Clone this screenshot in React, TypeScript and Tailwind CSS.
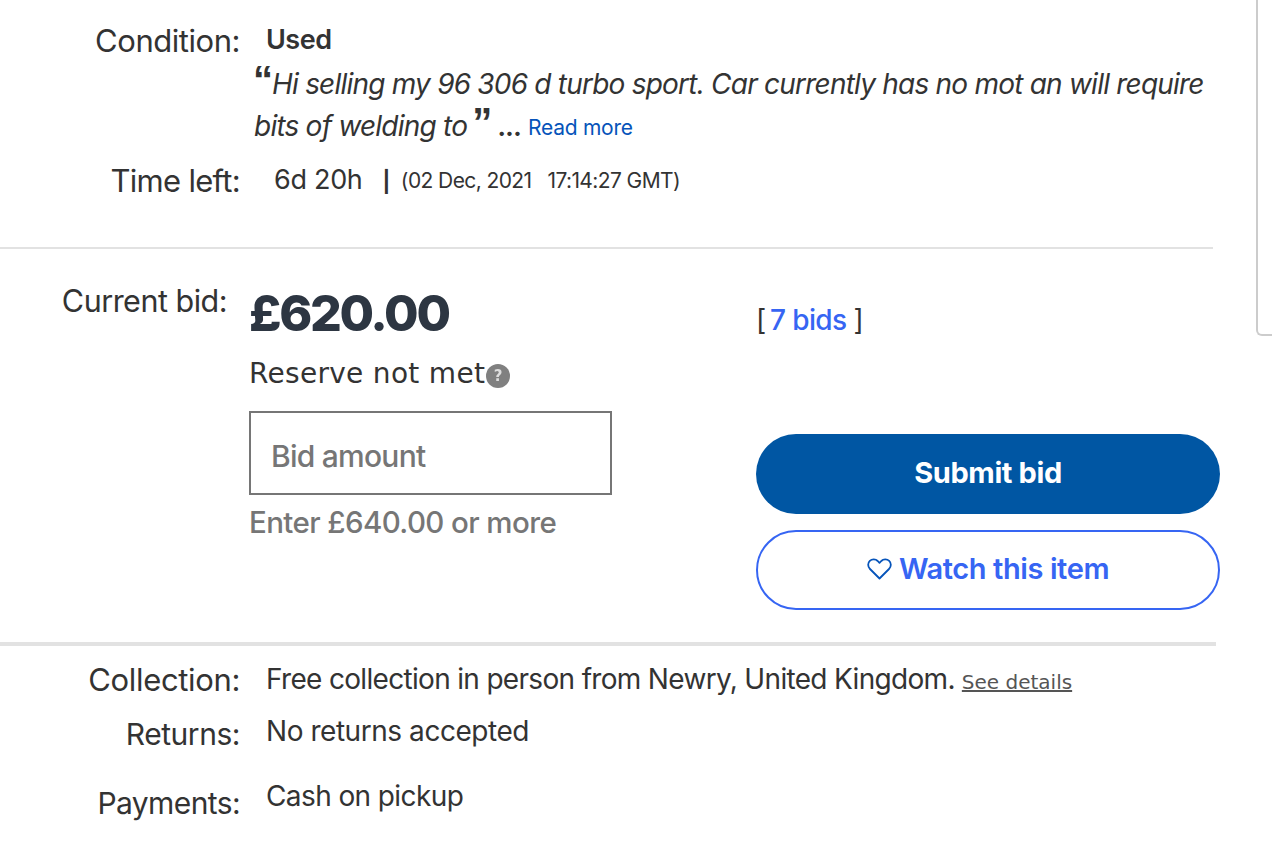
import React from "react";

const inter = "font-['Inter',sans-serif]";

function Label({ children, className = "" }: { children: React.ReactNode; className?: string }) {
  return <div className={`w-[240px] shrink-0 text-right leading-[36px] text-[#333] ${className}`}>{children}</div>;
}

export default function App() {
  return (
    <div className={`relative h-[848px] w-[1272px] overflow-hidden bg-white text-[#333] ${inter}`}>
      <div className="absolute left-[1256px] top-[-10px] h-[346px] w-[30px] rounded-bl-[6px] border-b-2 border-l-2 border-[#ccc]" />

      <section className="h-[247px] pt-[23px]">
        <div className="flex">
          <Label className="text-[31px] tracking-[-0.46px]">Condition:</Label>
          <div className="ml-[26px] mt-[-1px] text-[27px] font-semibold leading-[36px] tracking-[-0.5px]">Used</div>
        </div>
        <div className="ml-[253px] mt-[4px] w-[970px] text-[28px] italic leading-[42px] tracking-[-0.78px]">
          <span className="inline-block w-[19px] font-['Liberation_Sans',sans-serif] text-[40px] font-bold not-italic leading-[0] tracking-normal">“</span>Hi selling my 96 306 d turbo sport. Car currently has no mot an will require
          <br />
          <span className="ml-[1px]">bits of welding to</span><span className="ml-[5px] inline-block w-[18px] font-['Liberation_Sans',sans-serif] text-[40px] font-bold not-italic leading-[0] tracking-normal">”</span>
          <span className="ml-[7px] font-semibold not-italic tracking-[-1px]">...</span>
          <a className="ml-[7px] align-[1px] text-[21px] not-italic tracking-[-0.25px] text-[#0654ba]">Read more</a>
        </div>
        <div className="mt-[13px] flex items-center">
          <Label className="text-[31px] tracking-[-0.7px]">Time left:</Label>
          <div className="ml-[34px] mt-[-2px] text-[27px] tracking-[-0.3px]">6d 20h</div>
          <div className="ml-[20px] mt-[1px] text-[21px] font-bold tracking-[-0.5px]">|</div>
          <div className="ml-[11px] mt-[-2px] text-[21px] tracking-[-0.6px]">(02 Dec, 2021</div>
          <div className="ml-[16px] mt-[-2px] text-[21px] tracking-[-0.6px]">17:14:27 GMT)</div>
        </div>
      </section>

      <hr className="h-[2px] w-[1213px] border-0 bg-[#e2e2e2]" />

      <section className="flex h-[393px]">
        <div className="w-[227px] shrink-0 pt-[34px] text-right text-[30.5px] leading-[36px] tracking-[-0.5px]">Current bid:</div>
        <div className="ml-[22px] w-[363px] shrink-0">
          <div className="pt-[34px] text-[50px] font-extrabold leading-[60px] tracking-[-2.3px] text-[#2d3642]">£620.00</div>
          <div className="mt-[11px] flex items-center font-['DejaVu_Sans',sans-serif] text-[28px] leading-[40px] tracking-[0.3px]">
            Reserve not met
            <span className="ml-[1px] mt-[3px] flex h-[24px] w-[24px] items-center justify-center rounded-full bg-[#808080] text-[15px] font-bold tracking-normal text-[#ddd] blur-[0.4px]">?</span>
          </div>
          <div className="mt-[17px] flex h-[84px] w-[363px] items-center border-2 border-[#767676] pl-[20px] pt-[7px] font-medium text-[30px] tracking-[-0.75px] text-[#767676]">Bid amount</div>
          <div className="mt-[7px] text-[29.5px] font-medium leading-[40px] tracking-[-0.6px] text-[#767676]">Enter £640.00 or more</div>
        </div>
        <div className="ml-[144px] w-[464px] shrink-0">
          <div className="flex pt-[51px] text-[28px] leading-[40px] tracking-[-0.3px]">
            <span>[</span>
            <a className="ml-[4px] font-medium tracking-[-0.6px] text-[#3665f3]">7 bids</a>
            <span className="ml-[7px]">]</span>
          </div>
          <button className="mt-[94px] flex h-[80px] w-[464px] items-center justify-center rounded-full bg-[#0056a3] pb-[2px] text-[29px] font-bold tracking-[-0.4px] text-white">Submit bid</button>
          <button className="mt-[16px] flex h-[80px] w-[464px] items-center justify-center gap-[7px] rounded-full border-2 border-[#3665f3] pb-[2px] text-[29px] font-semibold tracking-[-0.4px] text-[#3665f3]">
            <svg width="25" height="22" viewBox="0 0 25 22" fill="none" stroke="#0654ba" strokeWidth="1.8" strokeLinejoin="round">
              <path d="M12.5 20.5 3 11C.6 8.6.6 5 2.8 2.9 5 .8 8.6.9 10.7 3l1.8 1.9L14.3 3c2.1-2.1 5.7-2.2 7.9-.1 2.2 2.1 2.2 5.7-.2 8.1z" />
            </svg>
            Watch this item
          </button>
        </div>
      </section>

      <hr className="h-[4px] w-[1216px] border-0 bg-[#e2e2e2]" />

      <section className="pt-[16px]">
        <div className="flex">
          <Label className="text-[31px] tracking-[-0.35px]">Collection:</Label>
          <div className="ml-[26px] mt-[-1px] text-[28px] leading-[36px] tracking-[-0.68px]">
            Free collection in person from Newry, United Kingdom.
            <a className="ml-[7px] font-['DejaVu_Sans',sans-serif] text-[20px] tracking-normal text-[#555] underline">See details</a>
          </div>
        </div>
        <div className="mt-[16px] flex">
          <Label className="text-[30px] tracking-[-0.46px]">Returns:</Label>
          <div className="ml-[26px] mt-[-3px] text-[28px] leading-[36px] tracking-[-0.45px]">No returns accepted</div>
        </div>
        <div className="mt-[33px] flex">
          <Label className="text-[30px] tracking-[-0.6px]">Payments:</Label>
          <div className="ml-[26px] mt-[-7px] text-[28px] leading-[36px] tracking-[-0.6px]">Cash on pickup</div>
        </div>
      </section>
    </div>
  );
}
